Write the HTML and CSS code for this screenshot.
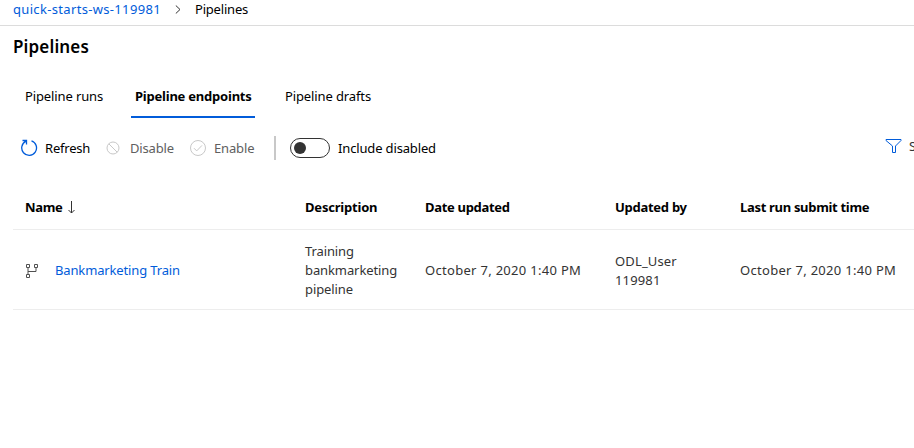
FILE: index.html
```html
<!DOCTYPE html>
<html lang="en">
<head>
<meta charset="utf-8">
<title>Pipelines</title>
<link rel="stylesheet" href="styles.css">
</head>
<body>
<nav class="breadcrumb">
  <a class="crumb-link" href="#">quick-starts-ws-119981</a>
  <svg class="chevron" width="6" height="9" viewBox="0 0 6 9"><path d="M.8.5 5 4.5.8 8.5"/></svg>
  <span class="crumb-current">Pipelines</span>
</nav>
<main>
  <h1>Pipelines</h1>
  <div class="tabs">
    <a class="tab tab-runs">Pipeline runs</a>
    <a class="tab tab-active">Pipeline endpoints</a>
    <a class="tab tab-drafts">Pipeline drafts</a>
  </div>
  <div class="toolbar">
    <button class="action refresh"><svg width="18" height="18" viewBox="0 0 18 18"><path d="M11.5 1.9A7.4 7.4 0 1 1 6 2.2M2.5 1.5h4v4"/></svg><span>Refresh</span></button>
    <button class="action disable"><svg width="14" height="14" viewBox="0 0 14 14"><circle cx="7" cy="7" r="6"/><path d="m2.8 2.8 8.4 8.4"/></svg><span>Disable</span></button>
    <button class="action enable"><svg width="16" height="16" viewBox="0 0 16 16"><circle cx="8" cy="8" r="7.5"/><path d="m4 8.2 2.7 2.7L12 5.4"/></svg><span>Enable</span></button>
    <div class="divider"></div>
    <div class="switch"><div class="knob"></div></div>
    <span class="switch-label">Include disabled</span>
    <div class="filter"><svg width="18" height="16" viewBox="0 0 18 16"><path d="M1 1.5h15v1L10.5 8v6.5h-3V8L1 2.5z"/></svg><span>Show filters</span></div>
  </div>
  <div class="table">
    <div class="row head">
      <div class="name-head"><span class="h-name">Name</span><svg width="8" height="13" viewBox="0 0 8 13"><path d="M3.5 0v12M.5 9l3 3 3-3"/></svg></div>
      <div><span class="h-desc">Description</span></div>
      <div><span class="h-date">Date updated</span></div>
      <div><span class="h-by">Updated by</span></div>
      <div><span class="h-last">Last run submit time</span></div>
    </div>
    <div class="row item">
      <div class="name-cell"><svg width="14" height="15" viewBox="0 0 14 15"><path d="M1.5 1.5h3v3h-3zM9.5 1.5h3v3h-3zM1.5 11.5h3v3h-3zM3 4.5v7M3 8.5h8v-4"/></svg><a class="item-link" href="#">Bankmarketing Train</a></div>
      <div class="desc">Training<br>bankmarketing<br>pipeline</div>
      <div class="date">October 7, 2020 1:40 PM</div>
      <div class="user">ODL_User<br>119981</div>
      <div class="date">October 7, 2020 1:40 PM</div>
    </div>
  </div>
</main>
</body>
</html>
```
FILE: styles.css
```css
* { box-sizing: border-box; }
body { margin: 0; height: 448px; overflow: hidden; background: #fff; color: #000; font: 13px/19px "Noto Sans", "Open Sans", sans-serif; white-space: nowrap; }
a { text-decoration: none; color: inherit; }
svg { flex: none; fill: none; stroke: currentColor; }
.breadcrumb { display: flex; height: 26px; padding: 0 0 0 13px; border-bottom: 1px solid #dcdcdc; }
.crumb-link, .item-link { color: #015cda; }
.crumb-link { width: 147px; letter-spacing: .33px; }
.crumb-current { letter-spacing: -.2px; }
.chevron { margin: 5px 14px 0 15px; stroke: #333; }
main { padding-left: 13px; }
h1 { margin: 0; padding-top: 9px; height: 50px; font-size: 17px; line-height: 24px; font-weight: 600; letter-spacing: .15px; }
.tabs { display: flex; height: 42px; }
.tab { height: 42px; padding: 11px 4px 0; letter-spacing: -.12px; }
.tab-runs { width: 86px; margin: 0 24px 0 8px; }
.tab-active { width: 124px; margin-right: 26px; font-weight: 700; letter-spacing: -.22px; border-bottom: 2px solid #015cda; }
.toolbar { display: flex; align-items: center; height: 60px; padding-left: 7px; }
.toolbar > * { flex-shrink: 0; }
.action { display: flex; align-items: center; padding: 0; border: 0; background: none; font: inherit; }
.action span { display: block; }
.refresh { width: 86px; gap: 7px; letter-spacing: -.2px; }
.refresh svg { color: #015cda; stroke-width: 1.3; }
.disable { width: 84px; gap: 10px; color: #606060; letter-spacing: -.15px; }
.enable { width: 84px; gap: 8px; color: #606060; letter-spacing: -.15px; }
.disable svg, .enable svg { color: #c8c8c8; }
.divider { width: 2px; height: 24px; background: #c8c8c8; }
.switch { width: 40px; height: 20px; margin: 0 8px 0 14px; padding: 3px; border: 1px solid #333; border-radius: 10px; }
.knob { width: 12px; height: 12px; border-radius: 50%; background: #333; }
.switch-label { width: 98px; letter-spacing: -.15px; }
.filter { display: flex; align-items: center; gap: 6px; margin: -3px 0 0 449px; color: #333; }
.filter svg { margin-top: -1px; color: #015cda; }
.row { display: grid; grid-template-columns: 280px 120px 190px 125px 1fr; align-items: center; padding-left: 12px; border-bottom: 1px solid #ededed; }
.head { height: 52px; padding-top: 8px; font-weight: 700; }
.h-name { letter-spacing: -.35px; }
.h-desc { letter-spacing: -.2px; }
.h-date, .h-last { letter-spacing: -.31px; }
.h-by { letter-spacing: -.27px; }
.item { height: 80px; padding-top: 2px; color: #333; }
.item-link { letter-spacing: -.14px; }
.desc { letter-spacing: -.1px; }
.date { letter-spacing: .3px; }
.user { letter-spacing: .15px; }
.name-head { display: flex; align-items: center; gap: 6px; }
.name-head svg { color: #333; }
.name-cell { display: flex; align-items: center; gap: 16px; }
.name-cell svg { color: #505050; }
```
